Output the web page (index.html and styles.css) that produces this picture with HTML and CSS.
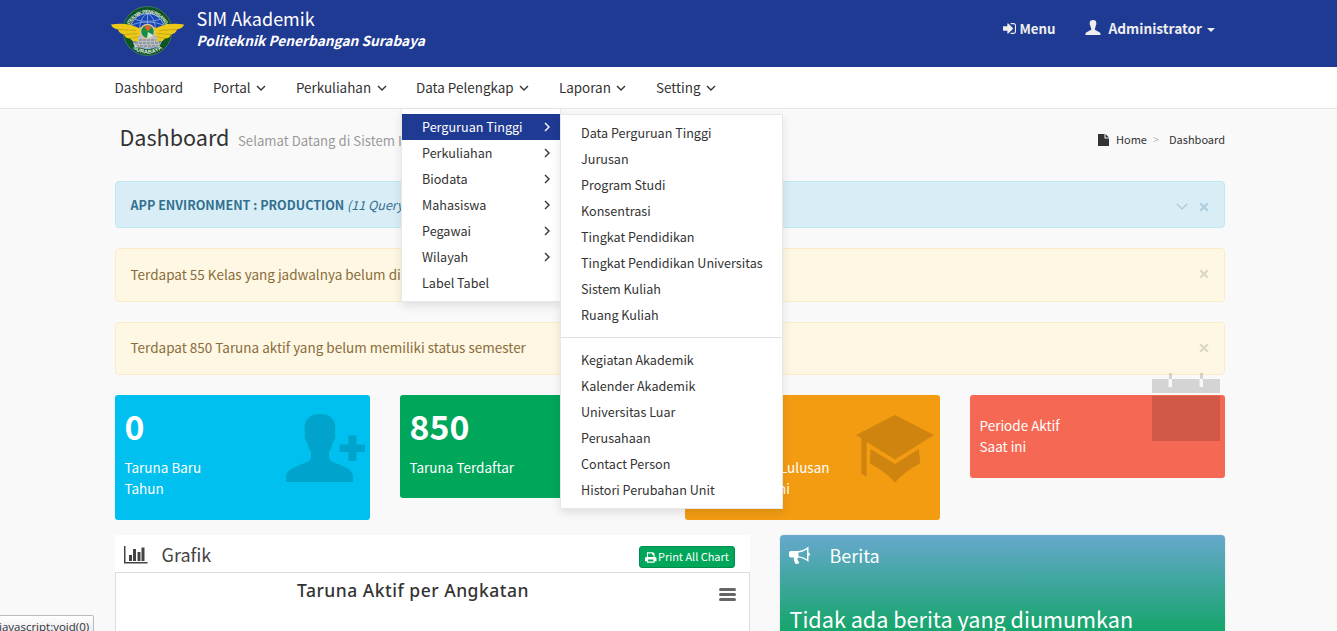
FILE: index.html
```html
<!DOCTYPE html>
<html lang="id">
<head>
<meta charset="utf-8">
<title>SIM Akademik</title>
<link rel="stylesheet" href="styles.css">
</head>
<body>
<header class="top">
  <div class="container top-row">
    <svg class="logo" viewBox="0 0 74 52">
      <circle cx="36.5" cy="26" r="24.5" fill="#0d5424" stroke="#5d9270" stroke-width=".6"/>
      <circle cx="36.5" cy="26" r="17.6" fill="#1948b5" stroke="#9fb7e2" stroke-width="1"/>
      <g fill="none" stroke="#8ca9e3" stroke-width=".8"><ellipse cx="36.5" cy="26" rx="8" ry="17"/><path d="M36.500 9v17M20 20q16-6 33 0M23 14q13 5 27 0"/></g>
      <path id="arcTop" d="M16.800 28a19.700 19.700 0 1 1 39.400 0" fill="none"/>
      <path id="arcBottom" d="M15.500 34a22.400 22.400 0 0 0 42 0" fill="none"/>
      <text class="seal"><textPath href="#arcTop" textLength="59">POLITEKNIK PENERBANGAN</textPath></text>
      <path d="M0 19.500Q16 17 28 23q8-5 17 0Q57 17 73 19.500q-1 4-7 5q-1 4-6 5q-1 4-6 4q-3 4-10 3H29q-7 1-10-3q-5 0-6-4q-5-1-6-5q-6-1-7-5z" fill="#ecc817"/>
      <path d="M7 24.500l18 1M13 29.500l14-1M19 33.500l9-2M66 24.500l-18 1M60 29.500l-14-1M54 33.500l-9-2" stroke="#b99b19" stroke-width=".7"/>
      <path d="M27 32l3-4h13l3 4v4l4 2-2 4-12 1-12-1-2-4 5-2z" fill="#b7bcc1"/>
      <path d="M24 38h25M25 41h23M28 35h17" stroke="#747b84" stroke-width="1.100" stroke-dasharray="3 1"/>
      <circle cx="36.500" cy="26.500" r="7" fill="#139044" stroke="#e7be9e" stroke-width="1.400"/>
      <path d="M36.500 26.500l-3-5a6 6 0 0 1 7 1z" fill="#ef5b2a"/><path d="M37 27l5 3a6 6 0 0 1-6 3z" fill="#d2e6d7"/>
      <text class="seal seal-b"><textPath href="#arcBottom" startOffset="11" textLength="32">SURABAYA</textPath></text>
    </svg>
    <div class="brand"><div class="brand-name">SIM Akademik</div><div class="brand-sub">Politeknik Penerbangan Surabaya</div></div>
    <div class="top-menu">
      <svg class="i-sign" viewBox="0 128 1536 1536"><path d="M1184 896q0 26-19 45l-544 544q-19 19-45 19t-45-19-19-45v-288h-448q-26 0-45-19t-19-45v-384q0-26 19-45t45-19h448v-288q0-26 19-45t45-19 45 19l544 544q19 19 19 45zm352-352v704q0 119-84.500 203.500t-203.500 84.500h-320q-13 0-22.500-9.500t-9.500-22.500q0-4-1-20t-.5-26.500 3-23.500 10-19.500 20.500-6.500h320q66 0 113-47t47-113v-704q0-66-47-113t-113-47h-312l-11.500-1-11.500-3-8-5.500-7-9-2-13.500q0-4-1-20t-.5-26.500 3-23.500 10-19.500 20.500-6.500h320q119 0 203.500 84.500t84.500 203.500z"/></svg>
      <b class="menu-text">Menu</b>
      <svg class="i-user" viewBox="0 0 68 68"><path d="M0 68v-5c0-5 4-8 9-10l13-6c3-1 4-3 4-5v-4c-2-3-4-8-5-14-2-2-3-5-2-8C18 5 24 0 34 0s16 5 15 16c1 3 0 6-2 8-1 6-2 11-4 14v4c0 2 1 4 3 5l13 6c5 2 9 5 9 10v5z"/></svg>
      <b class="admin-text">Administrator</b><i class="caret"></i>
    </div>
  </div>
</header>
<nav class="nav">
  <div class="container nav-row">
    <a class="n1">Dashboard</a>
    <a class="n2">Portal<svg class="ang" viewBox="0 0 10 6"><path d="M1 1l4 4 4-4"/></svg></a>
    <a class="n3">Perkuliahan<svg class="ang" viewBox="0 0 10 6"><path d="M1 1l4 4 4-4"/></svg></a>
    <a class="n4">Data Pelengkap<svg class="ang" viewBox="0 0 10 6"><path d="M1 1l4 4 4-4"/></svg></a>
    <a class="n5">Laporan<svg class="ang" viewBox="0 0 10 6"><path d="M1 1l4 4 4-4"/></svg></a>
    <a class="n6">Setting<svg class="ang" viewBox="0 0 10 6"><path d="M1 1l4 4 4-4"/></svg></a>
  </div>
</nav>
<ul class="menu">
  <li class="on">Perguruan Tinggi<svg viewBox="0 0 6 10"><path d="M1 1l4 4-4 4"/></svg></li>
  <li>Perkuliahan<svg viewBox="0 0 6 10"><path d="M1 1l4 4-4 4"/></svg></li>
  <li>Biodata<svg viewBox="0 0 6 10"><path d="M1 1l4 4-4 4"/></svg></li>
  <li>Mahasiswa<svg viewBox="0 0 6 10"><path d="M1 1l4 4-4 4"/></svg></li>
  <li>Pegawai<svg viewBox="0 0 6 10"><path d="M1 1l4 4-4 4"/></svg></li>
  <li>Wilayah<svg viewBox="0 0 6 10"><path d="M1 1l4 4-4 4"/></svg></li>
  <li>Label Tabel</li>
</ul>
<ul class="menu submenu">
  <li>Data Perguruan Tinggi</li><li>Jurusan</li><li>Program Studi</li><li>Konsentrasi</li><li>Tingkat Pendidikan</li><li>Tingkat Pendidikan Universitas</li><li>Sistem Kuliah</li><li>Ruang Kuliah</li>
  <li class="divider"></li>
  <li>Kegiatan Akademik</li><li>Kalender Akademik</li><li>Universitas Luar</li><li>Perusahaan</li><li>Contact Person</li><li>Histori Perubahan Unit</li>
</ul>
<main class="container">
  <div class="page-head">
    <h1>Dashboard</h1><span class="lead">Selamat Datang di Sistem I</span>
    <div class="crumb"><svg class="i-file" viewBox="0 0 11 12"><path d="M0 0h6.500v4.500H11V12H0zM7.500 0L11 3.500H7.500z"/></svg><span class="c1">Home</span><span class="gt">&gt;</span><span class="c2">Dashboard</span></div>
  </div>
  <div class="alert info"><span class="env"><b>APP ENVIRONMENT : PRODUCTION</b> <i>(11 Query)</i></span><svg class="i-down" viewBox="0 0 12 7"><path d="M.7.7L6 6 11.300.7"/></svg><svg class="x" viewBox="0 0 10 10"><path d="M1.200 1.200l7.600 7.600M8.800 1.200L1.200 8.800"/></svg></div>
  <div class="alert warn w1"><span>Terdapat 55 Kelas yang jadwalnya belum di</span><svg class="x" viewBox="0 0 10 10"><path d="M1.200 1.200l7.600 7.600M8.800 1.200L1.200 8.800"/></svg></div>
  <div class="alert warn w2"><span>Terdapat 850 Taruna aktif yang belum memiliki status semester</span><svg class="x" viewBox="0 0 10 10"><path d="M1.200 1.200l7.600 7.600M8.800 1.200L1.200 8.800"/></svg></div>
  <section class="cards">
    <div class="card cyan"><strong>0</strong><p>Taruna Baru<br>Tahun</p>
      <svg class="ci ci-user" viewBox="0 0 79 68"><path d="M0 68v-5c0-4 4-8 9-10l12-5c4-2 4-3 4-6v-4c-2-3-3-6-4-10-2-2-3-6-2-9C17 6 23 0 34 0s17 6 15 19c1 3 0 7-2 9-1 4-2 7-4 10v4c0 3 1 4 4 6l12 5c5 2 8 6 8 10v5zM53.500 30.500h9v-9h8v9h8.500v7.500h-8.500v9h-8v-9h-9z"/></svg></div>
    <div class="card green"><strong>850</strong><p>Taruna Terdaftar</p></div>
    <div class="card orange"><strong>0</strong><p><span>Jumlah Lulusan</span><br><span>Tahun ini</span></p>
      <svg class="ci ci-cap" viewBox="0 0 78 68"><path d="M39 0l39 20-39 24.500L10.700 27v34.500l-5.400-2.700V23.300L0 20zM14.700 34L39 49l23.700-15 1.700 14.300Q48 57 39 67.500 30 57 13.700 48.500z"/></svg></div>
    <div class="card red"><p>Periode Aktif<br>Saat ini</p>
      <svg class="ci ci-cal" viewBox="0 0 68 68"><path d="M0 6h16.500v8h3.500V6h27.500v8h3.500V6h17v14H0zM0 23h68v45H0zM17 0h3v6h-3zM48 0h3v6h-3z"/></svg></div>
  </section>
  <section class="panels">
    <div class="panel">
      <div class="p-head"><svg class="i-bars" viewBox="0 0 24 18"><path d="M0 0h1.500v16H23.500v1.500H0zM5 9h3v6H5zM9 3h3v12H9zM13.500 6h3v9h-3zM17.500 1.500h3V15h-3z"/></svg><h2>Grafik</h2>
        <span class="btn"><svg viewBox="0 0 12 11"><path fill-rule="evenodd" d="M2 0h6.500L10 1.500V5h.5Q12 5 12 6.500V9.500h-2V11H2V9.500H0v-3Q0 5 1.500 5H2zM3.200 1.200V5h5.600V2.500H7.300V1.200zM3.200 7.500v2.300h5.600V7.500z"/></svg>Print All Chart</span></div>
      <div class="chart"><span class="chart-title">Taruna Aktif per Angkatan</span><span class="burger"><i></i><i></i><i></i></span></div>
    </div>
    <div class="news"><div class="n-head"><svg class="i-horn" viewBox="0 0 21 18"><path fill-rule="evenodd" d="M19.500.5v6q1.500.7 1.500 2T19.500 10v6q-4.500-4-10-4.500-2 .7-.5 3 0 1 1.500 2-1.500 2-4 1.200Q4 13.500 5 11.500H1.800Q0 11.500 0 9.800V6.500Q0 5 1.800 5H8q6 0 11.500-4.500zM18 3.500Q14 6 9.500 6.500v3.700Q14 10.700 18 13.300z"/></svg><h2>Berita</h2></div><p>Tidak ada berita yang diumumkan</p></div>
  </section>
</main>
<div class="status"><span>javascript:void(0)</span></div>
</body>
</html>
```
FILE: styles.css
```css
*{box-sizing:border-box}
html,body{height:631px;overflow:hidden}
body{margin:0;background:#f9f9f9;color:#333;font-family:"Noto Sans CJK JP","Noto Sans CJK SC",sans-serif;font-size:13px;position:relative}
h1,h2,p,ul{margin:0;padding:0;font-weight:400}
svg{display:block;flex:none;fill:currentColor;overflow:visible}
.container{width:1110px;margin-left:115px}
.top{background:#1f3a93;height:67px;color:#fff}
.top-row{display:flex;height:67px}
.logo{width:74px;height:52px;margin:5px 0 0 -4px}
.seal{font:700 4.800px "Liberation Sans",sans-serif;fill:#e6efe8}
.seal-b{font-size:5.600px}
.brand{margin-left:11.500px;padding-top:7px;white-space:nowrap}
.brand-name{font-size:18px;line-height:23px}
.brand-sub{font-size:13.730px;line-height:20px;font-weight:700;font-style:italic}
.top-menu{display:flex;margin-left:auto;padding:19px 10px 0 0;line-height:20px;font-size:13.300px;color:#eee}
.i-sign{width:13px;height:13px;margin:3px 3px 0 0}
.menu-text{width:66px}
.i-user{width:16px;height:15px;margin:1px 7px 0 0}
.admin-text{font-size:13.700px;line-height:18px}
.caret{border:4px solid transparent;border-top-color:#eee;border-bottom:0;height:4px;margin:9px 0 0 5px}
.nav{height:42px;background:#fff;border-bottom:1px solid #e7e7e7}
.nav-row{display:flex;font-size:13.450px;line-height:40px;white-space:nowrap}
.nav a{display:flex;height:41px;margin-left:-.4px;margin-right:.4px}
.n1{width:98.300px}.n2{width:83px}.n3{width:120px}.n4{width:143px}.n5{width:97px}
.ang{width:10px;height:6px;margin:18px 0 0 5.500px}
.ang path,.menu path{fill:none;stroke:currentColor;stroke-width:1.400}
.menu{position:absolute;z-index:5;left:401px;top:109px;width:160px;height:193px;background:#fff;border:1px solid #e7e7e7;border-top:0;padding-top:5px;list-style:none;box-shadow:0 4px 9px rgba(0,0,0,.1);font-size:12.600px;line-height:26px}
.menu li{height:26px;padding:0 10px 0 20px;display:flex;justify-content:space-between;white-space:nowrap}
.menu svg{width:6px;height:10px;margin-top:8px}
.menu .on{background:#1f3a93;color:#fff}
.submenu{z-index:6;left:560px;top:114px;width:223px;height:395px;border-top:1px solid #e7e7e7}
.submenu .divider{height:1px;margin:9px 0;background:#e0e0e0}
.page-head{display:flex;height:72px;padding-left:4.500px;white-space:nowrap}
h1{font-size:21.600px;line-height:30px;margin-top:13px;width:118.500px}
.lead{font-size:13.200px;line-height:20px;margin-top:22px;color:#999}
.crumb{display:flex;margin-left:auto;margin-top:20px;font-size:11px;line-height:20px}
.i-file{width:11px;height:12px;margin:5px 7px 0 0}
.c1{width:37px}.gt{width:16px;color:#bbb;font-size:11px}.c2{width:56px}
.alert{border:1px solid;border-radius:4px;display:flex;padding:0 15px 0 14.500px;font-size:13.500px;white-space:nowrap;margin-bottom:20px}
.alert span{flex:1}
.alert path{fill:none;stroke:#000;stroke-opacity:.13;stroke-width:2.300}
.x{width:10px;height:10px;margin-top:19.500px}
.info{height:47px;background:#d9edf7;border-color:#bce8f1;color:#31708f;line-height:45px;font-size:12.550px}
.info path{stroke:#31708f;stroke-opacity:.25}
.info .i-down{width:12px;height:7px;margin:21px 11px 0 0}
.info .i-down path{stroke-width:1.500}
.warn{background:#fdf7e3;border-color:#fdebc8;color:#8a6d3b}
.w1{height:54px;line-height:50px}.w2{height:53px;line-height:49px}
.cards{display:flex;gap:30px;height:140px;align-items:flex-start}
.card{position:relative;width:255px;border-radius:3px;color:#fff;padding:10px 10px 10px 9.500px;font-size:13.500px;line-height:21px}
.card strong{display:block;font-size:33.800px;line-height:42px}
.card p{margin-top:10px}
.cyan{background:#00c0ef;height:125px}.green{background:#00a65a;height:103px}.orange{background:#f39c12;height:125px}.red{background:#f56954;height:83px}
.orange p span{display:inline-block;width:135px;text-align:right}
.orange p span+br+span{width:95.500px}
.ci{position:absolute;fill:rgba(0,0,0,.15)}
.ci-user{width:79px;height:68px;left:170.500px;top:19px}
.ci-cap{width:78px;height:68px;left:171px;top:19.500px}
.ci-cal{width:68px;height:68px;left:182px;top:-22px}
.panels{display:flex;gap:30px;height:96px}
.panel{width:635px;background:#fff}
.p-head{display:flex;height:37px;padding:0 15px 0 9px}
.i-bars{width:24px;height:18px;margin:11px 13.500px 0 0;color:#444}
h2{font-size:18px;line-height:38px;color:#444}
.btn{display:flex;margin:11px 0 0 auto;width:96px;height:22px;background:#00a65a;border:1px solid #008d4c;border-radius:3px;color:#fff;font-size:10.950px;line-height:19px;padding-left:5px;white-space:nowrap}
.btn svg{width:11.500px;height:11px;margin:5px 1.500px 0 0}
.chart{height:59px;border:1px solid #ddd;border-bottom:0;display:flex;padding-left:181px}
.chart-title{font:500 17.500px/34px "Noto Sans",sans-serif;letter-spacing:.5px;white-space:nowrap}
.burger{margin:15px 13px 0 auto;width:17px}
.burger i{display:block;height:3px;border-radius:1.500px;background:#666;margin-bottom:2px}
.news{width:445px;border-radius:4px 4px 0 0;background:linear-gradient(#67a8ce,#19a56f 92px);color:#fff;white-space:nowrap;box-shadow:0 0 2px rgba(0,0,0,.15)}
.n-head{display:flex;padding-left:9px;height:60px}
.n-head h2{color:#fff;line-height:40px}
.i-horn{width:21px;height:18px;margin:11px 19.500px 0 0}
.news p{font-size:21.600px;line-height:48px;padding-left:9.500px}
.status{position:absolute;left:-1px;top:615px;width:95px;height:20px;border:1px solid #bbb;background:linear-gradient(#fff,#e8e8ee);overflow:hidden;font:11.500px/22px "Open Sans",sans-serif;white-space:nowrap;border-radius:0 2px 0 0}
.status span{display:block;margin-left:-1px}
```
